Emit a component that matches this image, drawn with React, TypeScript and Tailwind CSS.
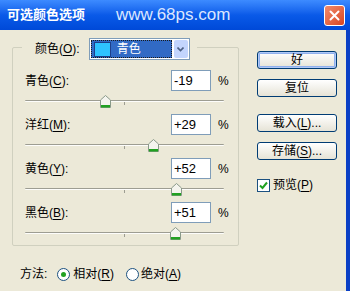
import React from "react";

const FONT = { fontFamily: '"Liberation Sans", "Noto Sans CJK SC", sans-serif' };

function U({ c }: { c: string }) {
  return <span className="underline underline-offset-2">{c}</span>;
}

function Thumb() {
  return (
    <svg width="11" height="13" viewBox="0 0 11 13" className="block">
      <path d="M5.5 0.5 L10.5 5 L10.5 12.5 L0.5 12.5 L0.5 5 Z" fill="#f4f4ee" stroke="#8a9a8a" />
      <rect x="1" y="10" width="9" height="2.5" fill="#21a121" />
    </svg>
  );
}

function Slider({ value }: { value: number }) {
  const left = ((value + 100) / 200) * 199;
  return (
    <div className="relative h-[23px] w-[200px]">
      <div className="absolute left-0 top-[9px] h-[2px] w-[199px] rounded-full border-t border-[#9d9d92] bg-[#fdfdfb]" />
      <div className="absolute left-[99px] top-[11px] h-[3px] w-px bg-[#9d9d92]" />
      <div className="absolute top-[4px]" style={{ left: left - 5.5 }}>
        <Thumb />
      </div>
    </div>
  );
}

function Row({ name, k, value, num }: { name: string; k: string; value: string; num: number }) {
  return (
    <div className="flex flex-col">
      <div className="flex h-[21px] items-center">
        <div className="w-[146px] text-[12px] text-black">
          {name}(<U c={k} />):
        </div>
        <div className="flex h-[21px] w-[40px] items-center border border-[#7f9db9] bg-white pl-[2px] text-[13px] text-black">
          {value}
        </div>
        <div className="ml-[7px] text-[12px] text-black">%</div>
      </div>
      <Slider value={num} />
    </div>
  );
}

function Btn({ children, def }: { children: React.ReactNode; def?: boolean }) {
  return (
    <div
      className={
        "flex h-[18px] w-[80px] items-center justify-center rounded-[3px] border border-[#003c74] bg-gradient-to-b from-white to-[#e6e3d6] text-[12px] text-black " +
        (def ? "shadow-[inset_0_0_0_1px_#b0c8f6,inset_0_0_0_2px_#8fb0ee]" : "")
      }
    >
      {children}
    </div>
  );
}

export default function App() {
  return (
    <div className="flex h-[291px] w-[350px] flex-col overflow-hidden bg-[#ece9d8]" style={FONT}>
      {/* Title bar */}
      <div className="relative flex h-[30px] items-center bg-gradient-to-b from-[#3d8bff] via-[#0a5ae8] to-[#0049d8]">
        <div className="ml-[7px] text-[13px] font-bold text-white">可选颜色选项</div>
        <div className="ml-[31px] text-[17px] text-[#dbe6ff]" style={{ fontFamily: '"Liberation Sans", sans-serif' }}>
          www.68ps.com
        </div>
        <div className="absolute right-[5px] top-[5px] flex h-[21px] w-[21px] items-center justify-center rounded-[3px] border border-white bg-gradient-to-br from-[#f08a6a] to-[#d8431c]">
          <svg width="11" height="11" viewBox="0 0 11 11">
            <path d="M1.5 1.5 L9.5 9.5 M9.5 1.5 L1.5 9.5" stroke="white" strokeWidth="2" strokeLinecap="round" />
          </svg>
        </div>
      </div>

      {/* Body */}
      <div className="flex flex-1 border-r-4 border-[#0a3fc5]">
        <div className="flex flex-1 flex-col">
          <div className="flex">
            {/* group */}
            <div className="ml-[12px] mt-[17px]">
              <div className="relative h-[199px] w-[227px] rounded-[2px] border border-[#d0d0bf] pl-[12px] pt-[22px]">
                <div className="absolute left-[9px] top-[-10px] flex items-center bg-[#ece9d8] pl-[13px] pr-[7px]">
                  <span className="text-[12px] text-black">
                    颜色(<U c="O" />):
                  </span>
                  <div className="ml-[9px] flex h-[22px] w-[101px] items-center border border-[#7f9db9] bg-white p-[1px]">
                    <div className="flex h-full w-[82px] items-center border border-dotted border-[#1a1a1a] bg-[#316ac5]">
                      <div className="ml-[2px] h-[15px] w-[17px] border border-[#1d3f8a] bg-[#2ec3ff]" />
                      <span className="ml-[6px] text-[12px] text-white">青色</span>
                    </div>
                    <div className="ml-[2px] flex h-full w-[14px] items-center justify-center rounded-[2px] bg-[#c3d5fd]">
                      <svg width="7" height="5" viewBox="0 0 7 5">
                        <path d="M0.5 0.5 L3.5 3.5 L6.5 0.5" fill="none" stroke="#4d6185" strokeWidth="1.6" />
                      </svg>
                    </div>
                  </div>
                </div>
                <Row name="青色" k="C" value="-19" num={-19} />
                <Row name="洋红" k="M" value="+29" num={29} />
                <Row name="黄色" k="Y" value="+52" num={52} />
                <Row name="黑色" k="B" value="+51" num={51} />
              </div>
            </div>
            {/* buttons */}
            <div className="ml-[18px] mt-[21px] flex flex-col">
              <Btn def>好</Btn>
              <div className="mt-[10px]">
                <Btn>复位</Btn>
              </div>
              <div className="mt-[17px]">
                <Btn>
                  载入(<U c="L" />)...
                </Btn>
              </div>
              <div className="mt-[10px]">
                <Btn>
                  存储(<U c="S" />)...
                </Btn>
              </div>
              <div className="mt-[16px] flex items-center">
                <div className="flex h-[13px] w-[13px] items-center justify-center border border-[#1c5180] bg-white">
                  <svg width="9" height="9" viewBox="0 0 9 9">
                    <path d="M1 4.5 L3.5 7 L8 1.5" fill="none" stroke="#21a121" strokeWidth="2" />
                  </svg>
                </div>
                <span className="ml-[3px] text-[12px] text-black">
                  预览(<U c="P" />)
                </span>
              </div>
            </div>
          </div>
          {/* bottom */}
          <div className="ml-[20px] mt-[19px] flex items-center text-[12px] text-black">
            <span>方法:</span>
            <div className="ml-[10px] flex h-[13px] w-[13px] items-center justify-center rounded-full border border-[#1c5180] bg-white">
              <div className="h-[5px] w-[5px] rounded-full bg-[#21a121]" />
            </div>
            <span className="ml-[3px]">
              相对(<U c="R" />)
            </span>
            <div className="ml-[12px] h-[13px] w-[13px] rounded-full border border-[#1c5180] bg-white" />
            <span className="ml-[2px]">
              绝对(<U c="A" />)
            </span>
          </div>
        </div>
      </div>
    </div>
  );
}
